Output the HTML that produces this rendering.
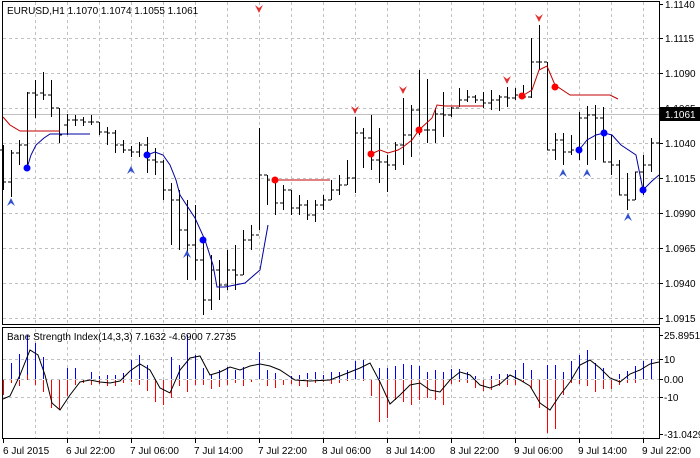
<!DOCTYPE html>
<html><head><meta charset="utf-8"><style>
html,body{margin:0;padding:0;background:#fff;width:700px;height:458px;overflow:hidden}
svg{display:block}
text{font-family:"Liberation Sans",sans-serif;font-size:10px;fill:#000}
</style></head><body>
<svg width="700" height="458" viewBox="0 0 700 458" xmlns="http://www.w3.org/2000/svg">
<g stroke="#c0c0c0" stroke-width="1" stroke-dasharray="3,3" fill="none" shape-rendering="crispEdges">
<path d="M3 38.5H659M3 73.5H659M3 108.5H659M3 143.5H659M3 178.5H659M3 213.5H659M3 248.5H659M3 283.5H659M3 318.5H659"/>
<path d="M35.5 2V324M67.5 2V324M99.5 2V324M131.5 2V324M163.5 2V324M195.5 2V324M227.5 2V324M259.5 2V324M291.5 2V324M323.5 2V324M355.5 2V324M387.5 2V324M419.5 2V324M451.5 2V324M483.5 2V324M515.5 2V324M547.5 2V324M579.5 2V324M611.5 2V324M643.5 2V324"/>
<path d="M3 359.5H659M3 379.5H659M3 397.5H659"/>
<path d="M35.5 329V438M67.5 329V438M99.5 329V438M131.5 329V438M163.5 329V438M195.5 329V438M227.5 329V438M259.5 329V438M291.5 329V438M323.5 329V438M355.5 329V438M387.5 329V438M419.5 329V438M451.5 329V438M483.5 329V438M515.5 329V438M547.5 329V438M579.5 329V438M611.5 329V438M643.5 329V438"/>
</g>
<path d="M3 114.5H659" stroke="#c0c0c0" shape-rendering="crispEdges"/>
<path stroke="#000" stroke-width="1" fill="none" shape-rendering="crispEdges" d="
M3.5 145V190M0 150h3M3 182h3
M11.5 150V197M8 182h3M11 153h3
M19.5 140V165M16 153h3M19 145h3
M27.5 92V167M24 145h3M27 93h3
M35.5 80V118M32 93h3M35 95h3
M43.5 72V100M40 93h3M43 95h3
M51.5 80V117M48 95h3M51 108h3
M59.5 108V143M56 108h3M59 135h3
M67.5 114V135M64 125h3M67 120h3
M75.5 115V126M72 120h3M75 120h3
M83.5 117V126M80 120h3M83 122h3
M91.5 115V125M88 122h3M91 122h3
M99.5 122V135M96 122h3M99 132h3
M107.5 127V145M104 132h3M107 133h3
M115.5 130V153M112 133h3M115 145h3
M123.5 140V153M120 145h3M123 150h3
M131.5 146V157M128 150h3M131 152h3
M139.5 142V157M136 152h3M139 145h3
M147.5 137V173M144 145h3M147 160h3
M155.5 148V175M152 160h3M155 162h3
M163.5 160V200M160 162h3M163 190h3
M171.5 183V245M168 190h3M171 200h3
M179.5 190V250M176 200h3M179 230h3
M187.5 200V280M184 230h3M187 245h3
M195.5 205V280M192 245h3M195 260h3
M203.5 240V315M200 260h3M203 300h3
M211.5 255V310M208 300h3M211 270h3
M219.5 260V300M216 270h3M219 285h3
M227.5 250V290M224 285h3M227 270h3
M235.5 245V290M232 270h3M235 275h3
M243.5 230V275M240 275h3M243 240h3
M251.5 225V250M248 240h3M251 235h3
M259.5 128V230M256 235h3M259 175h3
M267.5 175V205M264 175h3M267 180h3
M275.5 180V215M272 180h3M275 203h3
M283.5 185V210M280 203h3M283 190h3
M291.5 190V215M288 190h3M291 208h3
M299.5 195V215M296 208h3M299 205h3
M307.5 200V220M304 205h3M307 215h3
M315.5 200V222M312 215h3M315 205h3
M323.5 195V210M320 205h3M323 200h3
M331.5 180V200M328 200h3M331 190h3
M339.5 175V195M336 190h3M339 185h3
M347.5 160V185M344 185h3M347 178h3
M355.5 117V193M352 178h3M355 133h3
M363.5 128V168M360 133h3M363 138h3
M371.5 115V170M368 138h3M371 160h3
M379.5 128V183M376 160h3M379 162h3
M387.5 155V192M384 162h3M387 165h3
M395.5 142V170M392 165h3M395 145h3
M403.5 98V165M400 145h3M403 135h3
M411.5 105V157M408 135h3M411 110h3
M419.5 70V135M416 110h3M419 130h3
M427.5 79V143M424 130h3M427 130h3
M435.5 108V143M432 130h3M435 114h3
M443.5 92V137M440 114h3M443 115h3
M451.5 107V117M448 115h3M451 108h3
M459.5 88V107M456 108h3M459 100h3
M467.5 90V102M464 100h3M467 97h3
M475.5 95V103M472 97h3M475 100h3
M483.5 92V108M480 100h3M483 103h3
M491.5 90V110M488 103h3M491 100h3
M499.5 95V111M496 100h3M499 97h3
M507.5 87V107M504 97h3M507 98h3
M515.5 88V100M512 98h3M515 95h3
M523.5 85V97M520 95h3M523 97h3
M531.5 38V98M528 97h3M531 62h3
M539.5 25V70M536 62h3M539 62h3
M547.5 62V150M544 62h3M547 150h3
M555.5 133V160M552 150h3M555 140h3
M563.5 133V165M560 140h3M563 152h3
M571.5 135V155M568 152h3M571 150h3
M579.5 112V160M576 150h3M579 118h3
M587.5 106V165M584 118h3M587 115h3
M595.5 105V160M592 115h3M595 118h3
M603.5 107V162M600 118h3M603 162h3
M611.5 135V175M608 162h3M611 165h3
M619.5 160V195M616 165h3M619 195h3
M627.5 173V210M624 195h3M627 200h3
M635.5 172V200M632 200h3M635 172h3
M643.5 155V195M640 172h3M643 165h3
M651.5 138V172M648 165h3M651 143h3
M659.5 134V157M656 143h3
"/>
<g fill="none" stroke-width="1">
<path stroke="#c00000" d="M3 117L10 125L20 131H60"/>
<path stroke="#0000a0" d="M27 168L31 155L36 145L44 138L50 134H90"/>
<path stroke="#0000a0" d="M147 155L155 152L163 155L170 165L176 180L180 195L195 218L205 240L213 265L217 287L225 287L245 283L260 270L268 225"/>
<path stroke="#c00000" d="M275 180H330"/>
<path stroke="#c00000" d="M371 154L380 150L388 153L398 150L403 147L412 140L419 130L432 118L437 105L445 106H483"/>
<path stroke="#c00000" d="M522 96L532 90L539 70L547 66L555 85L570 95H610L618 99"/>
<path stroke="#0000a0" d="M579 150L587 140L596 135L604 133L612 135L621 145L636 155L643 190L652 181L659 175"/>
</g>
<g fill="#0000ff">
<circle cx="27" cy="168" r="3.5"/><circle cx="147" cy="155" r="3.5"/><circle cx="203" cy="240" r="3.5"/>
<circle cx="579" cy="150" r="3.5"/><circle cx="604" cy="133" r="3.5"/><circle cx="643" cy="190" r="3.5"/>
</g>
<g fill="#ff0000">
<circle cx="275" cy="180" r="3.5"/><circle cx="371" cy="154" r="3.5"/><circle cx="419" cy="130" r="3.5"/>
<circle cx="522" cy="96" r="3.5"/><circle cx="555" cy="87" r="3.5"/>
</g>
<g fill="#3050d0">
<path d="M11 198L15 206L11 203L7 206Z"/><path d="M131 166L135 174L131 171L127 174Z"/><path d="M187 250L191 258L187 255L183 258Z"/>
<path d="M563 169L567 177L563 174L559 177Z"/><path d="M587 169L591 177L587 174L583 177Z"/><path d="M628 213L632 221L628 218L624 221Z"/>
</g>
<g fill="#e03030">
<path d="M259 13L263 5L259 8L255 5Z"/><path d="M355 114L359 106L355 109L351 106Z"/><path d="M403 94L407 86L403 89L399 86Z"/>
<path d="M507 84L511 76L507 79L503 76Z"/><path d="M539 22L543 14L539 17L535 14Z"/>
</g>
<path stroke="#0000ff" fill="none" d="M11.5 379V363M19.5 379V354M27.5 379V335M35.5 379V343M43.5 379V357M67.5 379V368M75.5 379V368M91.5 379V372M99.5 379V376M107.5 379V375M115.5 379V375M123.5 379V373M131.5 379V360M139.5 379V355M147.5 379V365M171.5 379V357M179.5 379V365M187.5 379V335M195.5 379V355M203.5 379V368M211.5 379V375M219.5 379V370M227.5 379V367M235.5 379V370M243.5 379V367M259.5 379V352M267.5 379V370M275.5 379V373M291.5 379V376M299.5 379V375M307.5 379V373M315.5 379V372M323.5 379V375M331.5 379V372M339.5 379V372M347.5 379V370M355.5 379V361M363.5 379V360M379.5 379V368M387.5 379V368M395.5 379V366M403.5 379V364M411.5 379V365M419.5 379V366M427.5 379V372M435.5 379V370M443.5 379V372M451.5 379V369M459.5 379V369M467.5 379V372M475.5 379V376M491.5 379V376M499.5 379V374M507.5 379V374M515.5 379V370M523.5 379V363M531.5 379V370M547.5 379V365M555.5 379V365M563.5 379V372M571.5 379V361M579.5 379V355M587.5 379V350M595.5 379V363M603.5 379V368M619.5 379V374M627.5 379V371M635.5 379V366M643.5 379V361M651.5 379V359M659.5 379V358"/>
<path stroke="#ff0000" fill="none" d="M3.5 380V395M11.5 380V383M19.5 380V386M27.5 380V375M35.5 380V385M43.5 380V392M51.5 380V408M59.5 380V410M67.5 380V396M75.5 380V385M83.5 380V383M91.5 380V385M99.5 380V384M107.5 380V386M115.5 380V386M123.5 380V383M131.5 380V382M139.5 380V385M147.5 380V391M155.5 380V402M163.5 380V405M171.5 380V398M179.5 380V386M187.5 380V392M195.5 380V385M203.5 380V385M211.5 380V389M219.5 380V387M227.5 380V385M235.5 380V383M243.5 380V386M251.5 380V382M267.5 380V386M275.5 380V388M283.5 380V385M291.5 380V384M299.5 380V386M307.5 380V387M315.5 380V383M323.5 380V382M331.5 380V384M339.5 380V383M347.5 380V381M363.5 380V381M371.5 380V396M379.5 380V422M387.5 380V418M395.5 380V400M403.5 380V402M411.5 380V405M419.5 380V400M427.5 380V398M435.5 380V400M443.5 380V405M451.5 380V384M459.5 380V382M467.5 380V383M475.5 380V388M483.5 380V391M491.5 380V390M499.5 380V386M507.5 380V385M515.5 380V385M523.5 380V382M531.5 380V388M539.5 380V408M547.5 380V433M555.5 380V429M563.5 380V395M571.5 380V383M579.5 380V384M587.5 380V386M595.5 380V392M603.5 380V389M611.5 380V389M619.5 380V385M627.5 380V383M635.5 380V383"/>
<path fill="none" stroke="#000" d="M3 399L10 396L20 375L30 350L38 355L45 375L52 403L60 410L70 395L80 382L90 380L100 382L110 383L120 381L130 371L140 364L150 370L160 388L170 393L180 370L190 358L200 356L210 375L220 372L230 367L240 370L250 366L260 364L270 366L280 370L295 380L310 381L330 380L345 374L360 368L370 363L380 382L390 404L400 395L410 385L420 383L430 390L440 392L450 380L460 372L470 375L480 385L490 388L500 384L510 375L520 380L530 386L540 403L550 410L560 395L570 382L580 365L590 360L600 368L610 378L620 382L630 374L640 370L650 364L659 362"/>
<g stroke="#000" fill="none" shape-rendering="crispEdges">
<rect x="2.5" y="1.5" width="657" height="323"/>
<rect x="2.5" y="327.5" width="657" height="111"/>
<path d="M660 4.5h3M660 38.5h3M660 73.5h3M660 108.5h3M660 143.5h3M660 178.5h3M660 213.5h3M660 248.5h3M660 283.5h3M660 318.5h3M660 335.5h3M660 359.5h3M660 379.5h3M660 397.5h3M660 434.5h3"/>
<path d="M3.5 439v4M67.5 439v4M131.5 439v4M195.5 439v4M259.5 439v4M323.5 439v4M387.5 439v4M451.5 439v4M515.5 439v4M579.5 439v4M643.5 439v4"/>
</g>
<rect x="660" y="107" width="40" height="14" fill="#000"/>
<text x="7" y="14">EURUSD,H1  1.1070 1.1074 1.1055 1.1061</text>
<text x="7" y="340">Bane Strength Index(14,3,3) 7.1632 -4.6900 7.2735</text>
<g>
<text x="665" y="8">1.1140</text><text x="665" y="42">1.1115</text><text x="665" y="77">1.1090</text><text x="665" y="112">1.1065</text>
<text x="665" y="118" style="fill:#fff">1.1061</text>
<text x="665" y="147">1.1040</text><text x="665" y="182">1.1015</text><text x="665" y="217">1.0990</text><text x="665" y="252">1.0965</text>
<text x="665" y="287">1.0940</text><text x="665" y="322">1.0915</text>
<text x="664" y="339">25.8951</text><text x="664" y="363">10</text><text x="664" y="383">0.00</text><text x="664" y="401">-10</text><text x="664" y="438">-31.0429</text>
</g>
<g>
<text x="3" y="454">6 Jul 2015</text><text x="66" y="454">6 Jul 22:00</text><text x="130" y="454">7 Jul 06:00</text><text x="194" y="454">7 Jul 14:00</text>
<text x="258" y="454">7 Jul 22:00</text><text x="322" y="454">8 Jul 06:00</text><text x="386" y="454">8 Jul 14:00</text><text x="450" y="454">8 Jul 22:00</text>
<text x="514" y="454">9 Jul 06:00</text><text x="578" y="454">9 Jul 14:00</text><text x="642" y="454">9 Jul 22:00</text>
</g>
</svg>
</body></html>
